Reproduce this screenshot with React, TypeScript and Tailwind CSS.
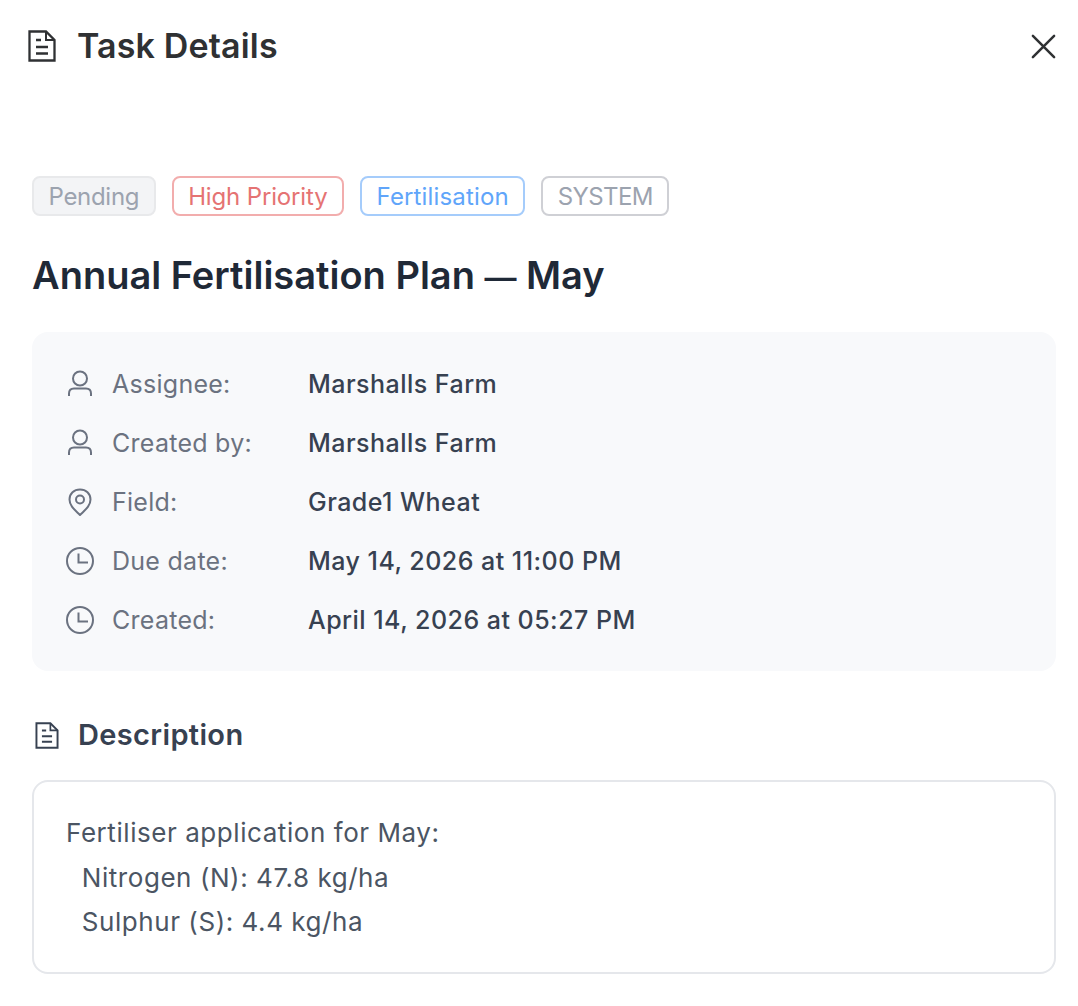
import React from "react";

const DocIcon = ({ className }: { className: string }) => (
  <svg viewBox="0 0 28 32" fill="none" stroke="currentColor" strokeWidth="2.3" className={className}>
    <path d="M1.5 1.5H18L26.5 10V30.5H1.5Z" />
    <path d="M18 1.5V10H26.5" strokeWidth="2" />
    <path d="M8 10H13M8 17H20M8 23.5H20" />
  </svg>
);

const UserIcon = () => (
  <svg viewBox="0 0 28 28" fill="none" stroke="#6b7280" strokeWidth="2" className="w-7 h-7 shrink-0">
    <circle cx="14" cy="8.5" r="7" />
    <path d="M3 26V23.5C3 20.5 5 18.5 8 18.5H20C23 18.5 25 20.5 25 23.5V26" />
  </svg>
);

const PinIcon = () => (
  <svg viewBox="0 0 28 28" fill="none" stroke="#6b7280" strokeWidth="2" className="w-7 h-7 shrink-0">
    <path d="M14 27C9 22 3.5 18 3.5 11.5C3.5 5.5 8 1.5 14 1.5C20 1.5 24.5 5.5 24.5 11.5C24.5 18 19 22 14 27Z" />
    <circle cx="14" cy="11.5" r="4" />
  </svg>
);

const ClockIcon = () => (
  <svg viewBox="0 0 28 28" fill="none" stroke="#6b7280" strokeWidth="2" className="w-7 h-7 shrink-0">
    <circle cx="14" cy="14" r="13" />
    <path d="M12.5 6.5V15.5H22" />
  </svg>
);

const rows = [
  { icon: <UserIcon />, label: "Assignee:", value: "Marshalls Farm" },
  { icon: <UserIcon />, label: "Created by:", value: "Marshalls Farm" },
  { icon: <PinIcon />, label: "Field:", value: "Grade1 Wheat" },
  { icon: <ClockIcon />, label: "Due date:", value: "May 14, 2026 at 11:00 PM" },
  { icon: <ClockIcon />, label: "Created:", value: "April 14, 2026 at 05:27 PM" },
];

export default function App() {
  return (
    <div className="w-[1078px] h-[1006px] bg-white overflow-hidden font-['Inter',sans-serif]">
      <header className="flex items-center justify-between h-[92px] pl-[28px] pr-[21px]">
        <div className="flex items-center gap-[21px] text-[#2f3133]">
          <DocIcon className="w-7 h-8" />
          <h1 className="text-[34px] leading-[40px] font-semibold tracking-[0.15px]">Task Details</h1>
        </div>
        <svg viewBox="0 0 28 28" fill="none" stroke="#2f3133" strokeWidth="2.6" strokeLinecap="round" className="w-[27px] h-[27px]">
          <path d="M3 3L25 25M25 3L3 25" />
        </svg>
      </header>

      <main className="pr-[22px] pt-[84px] pl-[32px]">
        <div className="flex gap-4 text-[24px] leading-[35px]">
          <span className="px-[14.5px] pt-[1px] rounded-lg border-2 border-[#e8e9eb] bg-[#f3f4f6] text-[#9ca3af] tracking-[-0.3px]">Pending</span>
          <span className="px-[14.5px] pt-[1px] rounded-lg border-2 border-[#f2adad] text-[#e57373] tracking-[-0.15px]">High Priority</span>
          <span className="px-[14.5px] pt-[1px] rounded-lg border-2 border-[#a5ccfb] text-[#60a5fa] tracking-[0.15px]">Fertilisation</span>
          <span className="px-[14.5px] pt-[1px] rounded-lg border-2 border-[#cfd0d5] text-[#9ca3af] tracking-[-0.6px]">SYSTEM</span>
        </div>

        <h2 className="mt-[36px] text-[38px] leading-[46px] font-semibold text-[#1f2937]">
          Annual Fertilisation Plan <span className="text-[32px] leading-none">—</span> May
        </h2>

        <section className="mt-[34px] h-[339px] rounded-2xl bg-[#f8f9fb] pt-[34px] pl-[34px] flex flex-col gap-[23px]">
          {rows.map((r) => (
            <div key={r.label + r.value} className="flex items-center h-[36px] text-[25px] leading-[36px]">
              {r.icon}
              <span className="ml-[18px] w-[196px] text-[#6b7280] tracking-[0.27px]">{r.label}</span>
              <span className="font-medium text-[#374151] tracking-[0.47px]">{r.value}</span>
            </div>
          ))}
        </section>

        <div className="mt-[44px] flex items-center gap-[19px] h-[40px] text-[#374151]">
          <DocIcon className="w-[24px] h-[27px] ml-[3px]" />
          <h3 className="text-[29px] leading-[40px] font-semibold tracking-[0.35px]">Description</h3>
        </div>

        <section className="mt-[25px] h-[194px] rounded-2xl border-2 border-[#e5e7eb] pt-[29px] pl-[32px]">
          <p className="text-[26px] leading-[44.6px] text-[#4b5563] whitespace-pre-wrap tracking-[0.56px]">
            {"Fertiliser application for May:\n  Nitrogen (N): 47.8 kg/ha\n  Sulphur (S): 4.4 kg/ha"}
          </p>
        </section>
      </main>
    </div>
  );
}
